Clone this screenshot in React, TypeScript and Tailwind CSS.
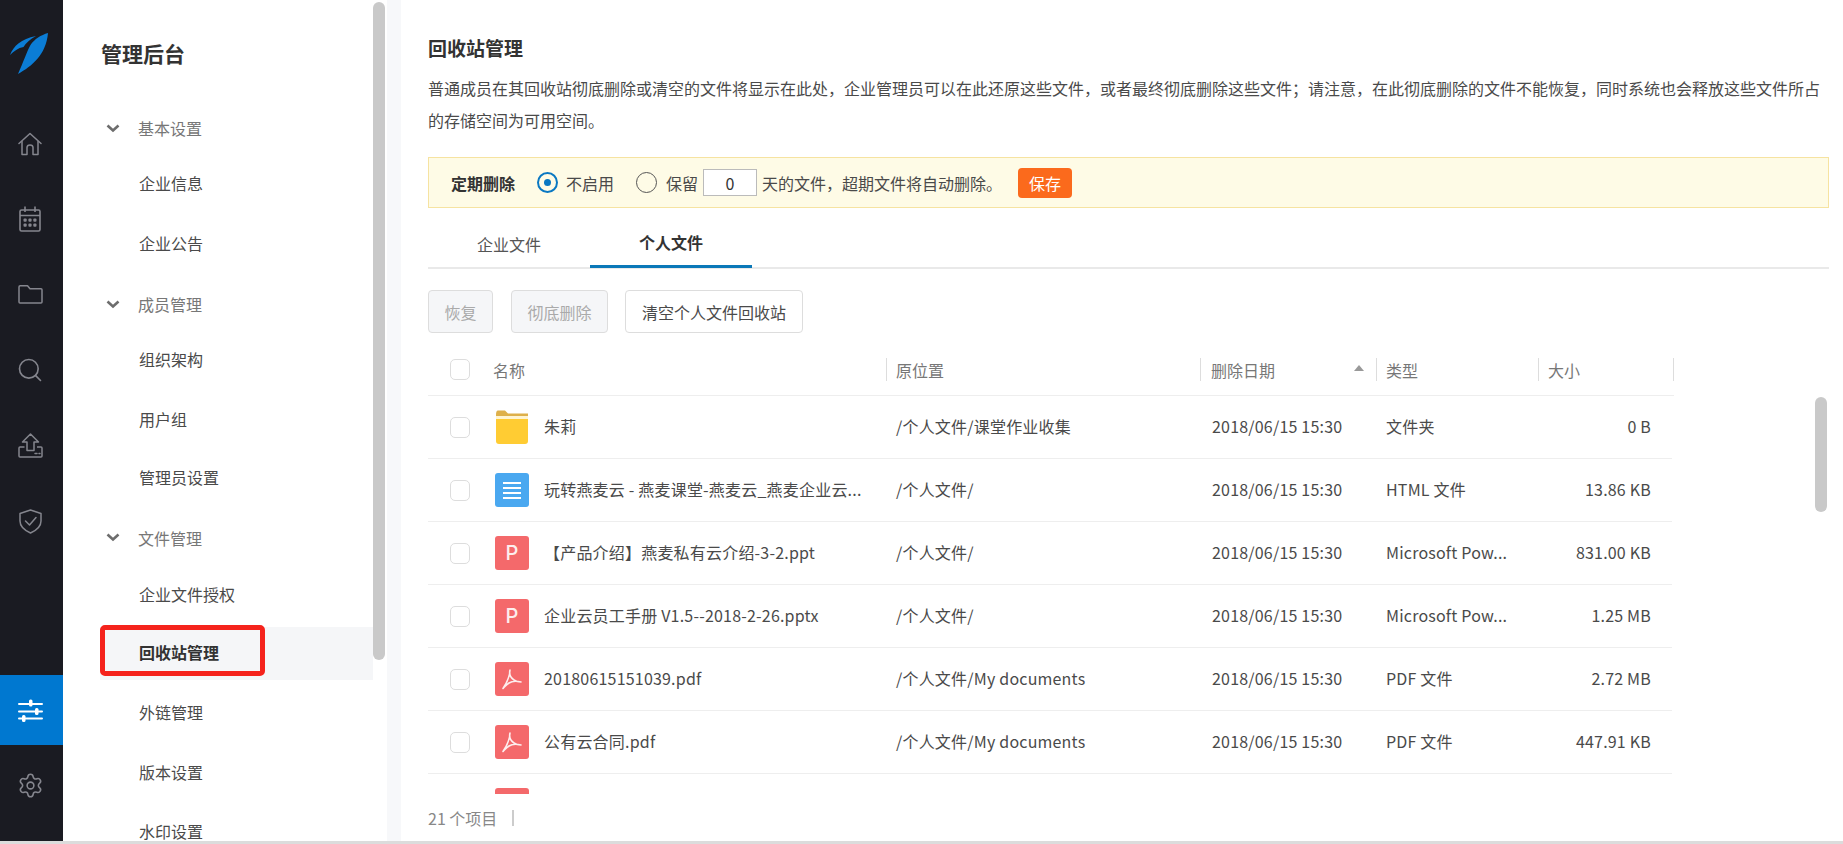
import { Search, Settings } from 'lucide-react'

type MenuRow = { label: string; kind: 'group' | 'item' | 'active'; cls: string }

const menu: MenuRow[] = [
  { label: '基本设置', kind: 'group', cls: 'h-[50px]' },
  { label: '企业信息', kind: 'item', cls: 'h-[59px]' },
  { label: '企业公告', kind: 'item', cls: 'h-[61px]' },
  { label: '成员管理', kind: 'group', cls: 'h-[62px] -mb-[6px]' },
  { label: '组织架构', kind: 'item', cls: 'h-[60px]' },
  { label: '用户组', kind: 'item', cls: 'h-[60px]' },
  { label: '管理员设置', kind: 'item', cls: 'h-[56px]' },
  { label: '文件管理', kind: 'group', cls: 'h-[65px] -mb-[6px]' },
  { label: '企业文件授权', kind: 'item', cls: 'h-[63px] pb-[3px]' },
  { label: '回收站管理', kind: 'active', cls: 'h-[53px] pb-[3px]' },
  { label: '外链管理', kind: 'item', cls: 'h-[60px] mt-[2px]' },
  { label: '版本设置', kind: 'item', cls: 'h-[60px]' },
  { label: '水印设置', kind: 'item', cls: 'h-[39px] pt-[18px] leading-[16px]' },
]

type FileRow = { name: string; icon: 'folder' | 'doc' | 'ppt' | 'pdf'; path: string; type: string; size: string }

const files: FileRow[] = [
  { name: '朱莉', icon: 'folder', path: '/个人文件/课堂作业收集', type: '文件夹', size: '0 B' },
  { name: '玩转燕麦云 - 燕麦课堂-燕麦云_燕麦企业云...', icon: 'doc', path: '/个人文件/', type: 'HTML 文件', size: '13.86 KB' },
  { name: '【产品介绍】燕麦私有云介绍-3-2.ppt', icon: 'ppt', path: '/个人文件/', type: 'Microsoft Pow...', size: '831.00 KB' },
  { name: '企业云员工手册 V1.5--2018-2-26.pptx', icon: 'ppt', path: '/个人文件/', type: 'Microsoft Pow...', size: '1.25 MB' },
  { name: '20180615151039.pdf', icon: 'pdf', path: '/个人文件/My documents', type: 'PDF 文件', size: '2.72 MB' },
  { name: '公有云合同.pdf', icon: 'pdf', path: '/个人文件/My documents', type: 'PDF 文件', size: '447.91 KB' },
]

function Logo() {
  return (
    <svg width="38" height="41" viewBox="0 0 38 41" fill="#0b7dd6">
      <path d="M38 0C31 2 24.500 6 20.500 12C17 18 13 30 8 41C22 33 36 22 38 0Z" />
      <path d="M0 22C3.500 13 11 6 26 3C20 6 16 10 13.500 14C8 15 4 18 0 22Z" />
    </svg>
  )
}

function HomeIcon() {
  return (
    <svg width="24" height="24" viewBox="0 0 24 24" fill="none" stroke="#85868e" strokeWidth="1.5" strokeLinejoin="round" strokeLinecap="round">
      <path d="M1 11.500L12 1.500L23 11.500" />
      <path d="M4 9.500V22.500H9V15.500C9 12 15 12 15 15.500V22.500H20V9.500" />
    </svg>
  )
}

function CalendarIcon() {
  return (
    <svg width="22" height="26" viewBox="0 0 22 26" fill="none" stroke="#85868e" strokeWidth="1.6">
      <rect x="1" y="4" width="20" height="21" rx="1.500" />
      <path d="M1 9.500H21M6 0.500V6M16 0.500V6" />
      <g fill="#85868e" stroke="none">
        <rect x="4.500" y="12.500" width="3.200" height="3.200" rx="1" />
        <rect x="9.400" y="12.500" width="3.200" height="3.200" rx="1" />
        <rect x="14.300" y="12.500" width="3.200" height="3.200" rx="1" />
        <rect x="4.500" y="17.500" width="3.200" height="3.200" rx="1" />
        <rect x="9.400" y="17.500" width="3.200" height="3.200" rx="1" />
        <rect x="14.300" y="17.500" width="3.200" height="3.200" rx="1" />
      </g>
    </svg>
  )
}

function FolderIcon() {
  return (
    <svg width="25" height="19" viewBox="0 0 25 19" fill="none" stroke="#85868e" strokeWidth="1.5" strokeLinejoin="round">
      <path d="M1 2C1 1.200 1.500 0.800 2.200 0.800H9.500L12 3.800H23C23.600 3.800 24 4.200 24 4.800V17C24 17.700 23.600 18 23 18H2C1.400 18 1 17.700 1 17Z" />
    </svg>
  )
}

function UploadIcon() {
  return (
    <svg width="25" height="25" viewBox="0 0 25 25" fill="none" stroke="#85868e" strokeWidth="1.500" strokeLinejoin="round">
      <path d="M12.500 1L4.500 9H9V17.500H16V9H20.500Z" />
      <path d="M6.500 14H2C1.400 14 1 14.400 1 15V23C1 23.600 1.400 24 2 24H23C23.600 24 24 23.600 24 23V15C24 14.400 23.600 14 23 14H19" />
      <path d="M17 20.500H19M21 20.500H22" strokeLinecap="round" />
    </svg>
  )
}

function ShieldIcon() {
  return (
    <svg width="23" height="25" viewBox="0 0 23 25" fill="none" stroke="#85868e" strokeWidth="1.500" strokeLinejoin="round" strokeLinecap="round">
      <path d="M11.500 1L22 4.500V12C22 18 16 22 11.500 24C7 22 1 18 1 12V4.500Z" />
      <path d="M6.500 12L10.500 16L17 8.500" />
    </svg>
  )
}

function SlidersIcon() {
  return (
    <svg width="25" height="23" viewBox="0 0 25 23" fill="none" stroke="#ffffff" strokeWidth="2" strokeLinecap="round">
      <path d="M1 5H24M1 12.500H24M1 19.500H24" />
      <g fill="#ffffff" stroke="none">
        <rect x="11" y="0.500" width="3.500" height="7" rx="1.500" />
        <rect x="17" y="9" width="3.500" height="7" rx="1.500" />
        <rect x="4" y="16" width="3.500" height="7" rx="1.500" />
      </g>
    </svg>
  )
}

function Chevron() {
  return (
    <svg width="14" height="9" viewBox="0 0 14 9" fill="none" stroke="#6d6d6d" strokeWidth="2.600">
      <path d="M1.500 1.500L7 6.500L12.500 1.500" />
    </svg>
  )
}

function FileIcon({ icon }: { icon: FileRow['icon'] }) {
  if (icon === 'folder') {
    return (
      <svg width="34" height="34" viewBox="0 0 34 34" className="shrink-0">
        <path d="M1 5.500C1 2 1.500 0.500 3 0.500H10L13 3.500H33V11H1Z" fill="#deb04a" />
        <rect x="1" y="6" width="32" height="3.500" fill="#fff4d0" />
        <path d="M1 9H33V31C33 33 32 34 30 34H4C2 34 1 33 1 31Z" fill="#ffcc33" />
      </svg>
    )
  }
  if (icon === 'doc') {
    return (
      <div className="w-[34px] h-[34px] shrink-0 rounded-[3px] bg-[#4aa8f0] flex flex-col items-center justify-center gap-[3px]">
        <div className="w-[18px] h-[2px] bg-white" />
        <div className="w-[18px] h-[2px] bg-white" />
        <div className="w-[18px] h-[2px] bg-white" />
        <div className="w-[18px] h-[2px] bg-white" />
      </div>
    )
  }
  if (icon === 'ppt') {
    return (
      <div className="w-[34px] h-[34px] shrink-0 rounded-[3px] bg-[#f4696b] flex items-center justify-center text-[#fdeeee] text-[20px] leading-none font-medium font-['Inter',sans-serif]">
        P
      </div>
    )
  }
  return (
    <div className="w-[34px] h-[34px] shrink-0 rounded-[3px] bg-[#f4696b] flex items-center justify-center">
      <svg width="20" height="21" viewBox="0 0 20 21" fill="none" stroke="#fdeeee" strokeWidth="1.600" strokeLinejoin="round">
        <path d="M8 1C7 5 9 9 12 11C14 12.500 17 13 19 13C15 12 10 12 7 14C5 15.500 2 18 1 19.500C4 15 8 8 8 1Z" />
      </svg>
    </div>
  )
}

function Checkbox() {
  return <div className="w-[20px] h-[21px] shrink-0 rounded-[5px] border border-[#dddddd] bg-white" />
}

export default function App() {
  return (
    <div className="w-[1843px] h-[844px] overflow-hidden bg-white font-['Noto_Sans_CJK_SC',sans-serif] text-[16px] text-[#4a4a4a]">
      <div className="flex h-[841px]">
        {/* icon rail */}
        <div className="w-[63px] shrink-0 bg-[#1a1b22] flex flex-col">
          <div className="h-[33px]" />
          <div className="pl-[10px]"><Logo /></div>
          <div className="h-[58px] shrink-0" />
          <div className="h-[24px] pr-[3px] flex items-center justify-center"><HomeIcon /></div>
          <div className="h-[50px] shrink-0" />
          <div className="h-[26px] pr-[3px] flex items-center justify-center"><CalendarIcon /></div>
          <div className="h-[53px] shrink-0" />
          <div className="h-[19px] pr-[3px] flex items-center justify-center"><FolderIcon /></div>
          <div className="h-[53px] shrink-0" />
          <div className="h-[26px] pr-[3px] flex items-center justify-center"><Search size={28} strokeWidth={1.4} color="#85868e" /></div>
          <div className="h-[50px] shrink-0" />
          <div className="h-[25px] pr-[3px] flex items-center justify-center"><UploadIcon /></div>
          <div className="h-[51px] shrink-0" />
          <div className="h-[25px] pr-[3px] flex items-center justify-center"><ShieldIcon /></div>
          <div className="h-[141px] shrink-0" />
          <div className="h-[70px] pr-[3px] shrink-0 bg-[#0078d0] flex items-center justify-center"><SlidersIcon /></div>
          <div className="h-[27px] shrink-0" />
          <div className="h-[26px] pr-[3px] flex items-center justify-center"><Settings size={27} strokeWidth={1.4} color="#85868e" /></div>
        </div>

        {/* menu panel */}
        <div className="w-[310px] shrink-0 overflow-hidden">
          <div className="pl-[38px] pt-[37px] text-[21px] leading-[32px] font-bold text-[#333333]">管理后台</div>
          <div className="mt-[34px] flex flex-col">
            {menu.map((row) => {
              if (row.kind === 'group') {
                return (
                  <div key={row.label} className={`${row.cls} flex items-center shrink-0 text-[#777777]`}>
                    <div className="ml-[43px] w-[32px] flex"><Chevron /></div>
                    <span>{row.label}</span>
                  </div>
                )
              }
              if (row.kind === 'active') {
                return (
                  <div key={row.label} className={`${row.cls} ml-[37px] relative flex items-center shrink-0 bg-[#f5f6f8] font-bold text-[#333333]`}>
                    <span className="pl-[39px]">{row.label}</span>
                    <div className="absolute left-0 top-[-2px] w-[165px] h-[51px] rounded-[5px] border-[5px] border-[#f5231c]" />
                  </div>
                )
              }
              return (
                <div key={row.label} className={`${row.cls} flex items-center shrink-0 pl-[76px]`}>
                  {row.label}
                </div>
              )
            })}
          </div>
        </div>

        {/* panel scrollbar */}
        <div className="w-[12px] shrink-0 pt-[2px]">
          <div className="h-[658px] rounded-[6px] bg-[#c9c9c9]" />
        </div>
        <div className="w-[2px] shrink-0" />
        <div className="w-[14px] shrink-0 bg-[#f7f8fa]" />

        {/* main */}
        <div className="flex-1 min-w-0 pl-[27px] pr-[14px]">
          <h1 className="pt-[32px] text-[19px] leading-[32px] font-bold text-[#333333]">回收站管理</h1>
          <p className="mt-[8px] leading-[32px] whitespace-nowrap">
            普通成员在其回收站彻底删除或清空的文件将显示在此处，企业管理员可以在此还原这些文件，或者最终彻底删除这些文件；请注意，在此彻底删除的文件不能恢复，同时系统也会释放这些文件所占
            <br />
            的存储空间为可用空间。
          </p>

          <div className="mt-[21px] h-[51px] border border-[#f6e3a1] bg-[#fefbe6] flex items-center pl-[22px]">
            <span className="font-bold text-[#333333]">定期删除</span>
            <span className="ml-[22px] w-[21px] h-[21px] rounded-full border-2 border-[#0a78c2] flex items-center justify-center">
              <span className="w-[7px] h-[7px] rounded-full bg-[#0a78c2]" />
            </span>
            <span className="ml-[8px]">不启用</span>
            <span className="ml-[22px] w-[21px] h-[21px] rounded-full border border-[#555555]" />
            <span className="ml-[9px]">保留</span>
            <span className="ml-[5px] w-[54px] h-[27px] border border-[#bbbbbb] bg-white flex items-center justify-center text-[#333333]">0</span>
            <span className="ml-[5px] w-[256px]">天的文件，超期文件将自动删除。</span>
            <span className="w-[54px] h-[30px] rounded-[4px] bg-[#fb6a1c] text-white flex items-center justify-center">保存</span>
          </div>

          <div className="h-[61px] border-b-2 border-[#e9e9e9] flex items-end">
            <div className="w-[162px] h-[59px] flex items-center justify-center text-[#555555] pt-[12px]">企业文件</div>
            <div className="w-[162px] h-[59px] flex items-center justify-center font-bold text-[#333333] pt-[10px] border-b-[3px] border-[#0a78b8] -mb-[1px]">个人文件</div>
          </div>

          <div className="mt-[21px] flex gap-[18px] h-[43px]">
            <button className="w-[65px] rounded-[4px] border border-[#dddddd] bg-[#f5f6f8] text-[#aaaaaa]">恢复</button>
            <button className="w-[97px] rounded-[4px] border border-[#dddddd] bg-[#f5f6f8] text-[#aaaaaa]">彻底删除</button>
            <button className="w-[178px] -ml-[1px] rounded-[4px] border border-[#dddddd] bg-white">清空个人文件回收站</button>
          </div>

          <div className="mt-[25px] w-[1246px] h-[38px] border-b border-[#eeeeee] grid grid-cols-[458px_314px_176px_162px_136px] text-[#777777]">
            <div className="h-[23px] flex items-center pl-[22px]">
              <Checkbox />
              <span className="ml-[23px]">名称</span>
            </div>
            <div className="h-[23px] flex items-center border-l border-[#dddddd] pl-[9px]">原位置</div>
            <div className="h-[23px] flex items-center border-l border-[#dddddd] pl-[10px]">
              <span>删除日期</span>
              <span className="ml-[79px] w-0 h-0 border-x-[5px] border-x-transparent border-b-[6px] border-b-[#999999] -mt-[3px]" />
            </div>
            <div className="h-[23px] flex items-center border-l border-[#dddddd] pl-[9px]">类型</div>
            <div className="h-[23px] flex items-center border-l border-r border-[#dddddd] pl-[9px]">大小</div>
          </div>

          <div className="flex">
            <div className="w-[1244px] h-[398px] overflow-hidden tracking-[0.2px]">
              {files.map((f) => (
                <div key={f.name} className="h-[63px] border-b border-[#eeeeee] grid grid-cols-[458px_314px_176px_162px_134px] items-center">
                  <div className="flex items-center pl-[22px]">
                    <Checkbox />
                    <div className="ml-[25px]"><FileIcon icon={f.icon} /></div>
                    <span className="ml-[15px] whitespace-nowrap -translate-y-px">{f.name}</span>
                  </div>
                  <div className="pl-[10px] whitespace-nowrap -translate-y-px">{f.path}</div>
                  <div className="pl-[12px] -translate-y-px">2018/06/15 15:30</div>
                  <div className="pl-[10px] whitespace-nowrap -translate-y-px">{f.type}</div>
                  <div className="pr-[21px] text-right -translate-y-px">{f.size}</div>
                </div>
              ))}
              <div className="pl-[67px] pt-[14px]">
                <div className="w-[34px] h-[34px] rounded-[3px] bg-[#f4696b]" />
              </div>
            </div>
            <div className="ml-[143px] mt-[1px] w-[12px] h-[115px] rounded-[6px] bg-[#c9c9c9]" />
          </div>

          <div className="h-[47px] flex items-center text-[#888888]">
            <span>21 个项目</span>
            <span className="ml-[15px] w-[2px] h-[16px] bg-[#cccccc]" />
          </div>
        </div>
      </div>
      <div className="h-[3px] bg-[#dcdcdc]" />
    </div>
  )
}
